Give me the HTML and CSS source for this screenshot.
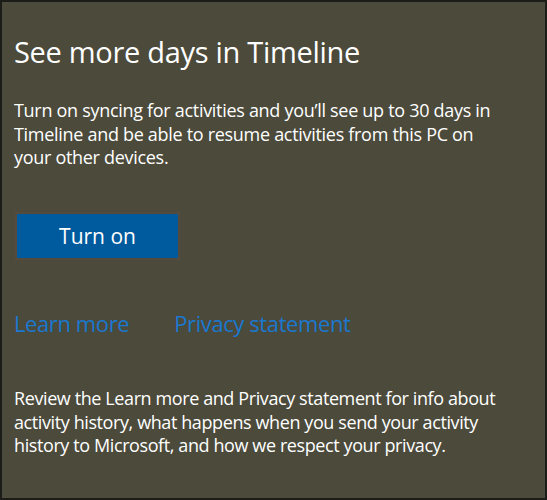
FILE: index.html
```html
<!DOCTYPE html>
<html>
<head>
<meta charset="utf-8">
<link rel="stylesheet" href="styles.css">
</head>
<body>
<div class="panel">
  <h1 class="title">See more days in Timeline</h1>
  <p class="desc">Turn on syncing for activities and you’ll see up to 30 days in Timeline and be able to resume activities from this PC on your other devices.</p>
  <div class="btn-wrap"><button class="btn">Turn on</button></div>
  <div class="links">
    <a class="link">Learn more</a>
    <a class="link">Privacy statement</a>
  </div>
  <p class="note">Review the Learn more and Privacy statement for info about activity history, what happens when you send your activity history to Microsoft, and how we respect your privacy.</p>
</div>
</body>
</html>
```
FILE: styles.css
```css
html, body {
  margin: 0;
  padding: 0;
  background: #1c1c18;
}
.panel {
  box-sizing: border-box;
  width: 547px;
  height: 500px;
  border: 2px solid #1c1c18;
  background: #4b4a3b;
  padding: 0 14px 0 12px;
  font-family: "Open Sans", "Noto Sans", sans-serif;
  color: #ffffff;
}
.title {
  margin: 0;
  padding-top: 31px;
  font-size: 29px;
  font-weight: 400;
  line-height: 38px;
  letter-spacing: -0.3px;
}
.desc {
  margin: 28px 0 0;
  max-width: 486px;
  font-size: 18px;
  line-height: 23.5px;
  letter-spacing: -0.3px;
}
.btn-wrap {
  margin-top: 44px;
  margin-left: 3px;
  display: flex;
}
.btn {
  width: 161px;
  height: 44px;
  background: #005a9e;
  border: none;
  outline: 2px solid #564a3c;
  color: #fff;
  font-family: "Open Sans", "Noto Sans", sans-serif;
  font-size: 21px;
  padding: 0;
}
.links {
  margin-top: 50.5px;
  display: flex;
  gap: 45px;
}
.link {
  color: #1a78cf;
  font-size: 22px;
  line-height: 30px;
  letter-spacing: -0.4px;
}
.note {
  margin: 49.3px 0 0;
  max-width: 510px;
  font-size: 18px;
  line-height: 23.5px;
  letter-spacing: -0.4px;
}
```
